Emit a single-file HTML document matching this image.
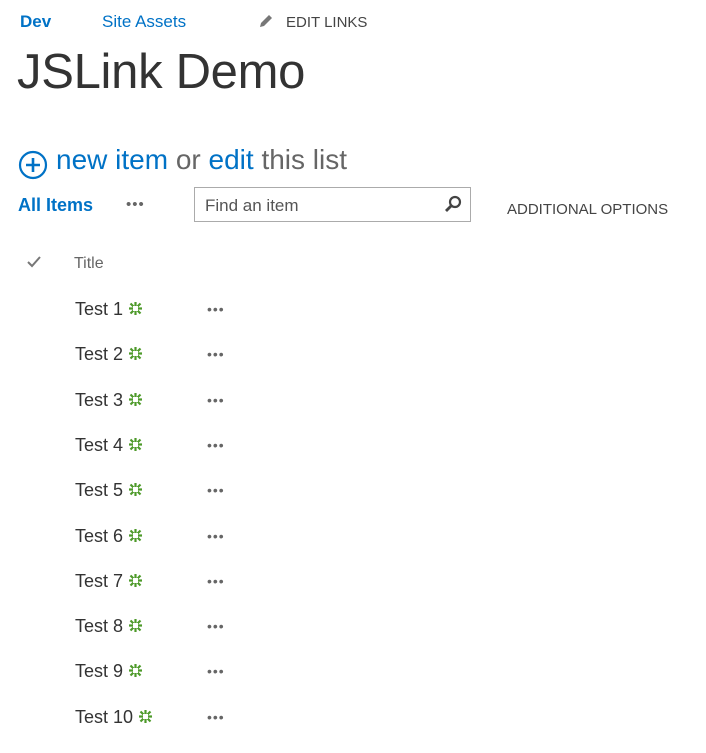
<!DOCTYPE html>
<html><head><meta charset="utf-8"><style>
*{margin:0;padding:0;box-sizing:border-box}
body{width:706px;height:753px;background:#fff;font-family:"Liberation Sans",sans-serif;position:relative;overflow:hidden}
.a{position:absolute;white-space:nowrap}
.blue{color:#0072c6}
.row{position:absolute;left:75px;font-size:18px;color:#333;white-space:nowrap}
.dots{position:absolute;left:207px;font-size:14px;color:#666;letter-spacing:1px}
.g{display:inline-block;vertical-align:middle;margin-left:6px;margin-top:-3px}
</style></head><body>
<div class="a blue" style="left:20px;top:12px;font-size:17px;font-weight:bold">Dev</div>
<div class="a blue" style="left:102px;top:12px;font-size:17px">Site Assets</div>
<svg class="a" style="left:257px;top:13px" width="17" height="17" viewBox="0 0 17 17"><path d="M3 14 L4 10 L12 2 L15 5 L7 13 Z" fill="#777"/></svg>
<div class="a" style="left:286px;top:14px;font-size:15px;color:#444">EDIT LINKS</div>
<div class="a" style="left:17px;top:44px;font-size:49px;color:#333;letter-spacing:-0.3px">JSLink Demo</div>
<svg class="a" style="left:18px;top:150px" width="30" height="30" viewBox="0 0 30 30"><circle cx="15" cy="15" r="13" fill="none" stroke="#0072c6" stroke-width="2.2"/><path d="M15 8v14M8 15h14" stroke="#0072c6" stroke-width="2.6"/></svg>
<div class="a" style="left:56px;top:144px;font-size:28px;color:#666"><span class="blue">new item</span> or <span class="blue">edit</span> this list</div>
<div class="a blue" style="left:18px;top:195px;font-size:18px;font-weight:bold">All Items</div>
<div class="a" style="left:126px;top:196px;font-size:15px;color:#666;letter-spacing:1px">•••</div>
<div class="a" style="left:194px;top:187px;width:277px;height:35px;border:1px solid #ababab"></div>
<div class="a" style="left:205px;top:196px;font-size:17px;color:#555">Find an item</div>
<svg class="a" style="left:443px;top:194px" width="20" height="20" viewBox="0 0 20 20"><circle cx="12" cy="8" r="5" fill="none" stroke="#444" stroke-width="2.2"/><path d="M8.5 11.5L3 17" stroke="#444" stroke-width="2.8"/></svg>
<div class="a" style="left:507px;top:201px;font-size:15px;color:#444">ADDITIONAL OPTIONS</div>
<svg class="a" style="left:27px;top:256px" width="14" height="12" viewBox="0 0 14 12"><path d="M1 6l4 4 8-9" fill="none" stroke="#777" stroke-width="2"/></svg>
<div class="a" style="left:74px;top:255px;font-size:16px;color:#666">Title</div>
<div id="rows"></div>
<script>
var h='';
for(var i=1;i<=10;i++){
 var y=Math.round(299+(i-1)*45.3);
 h+='<div class="row" style="top:'+y+'px">Test '+i+'<svg class="g" width="13" height="13" viewBox="0 0 13 13"><g stroke="#4e9a2a" stroke-width="2.2"><path d="M6.5 0v13M0 6.5h13M1.5 1.5l10 10M11.5 1.5l-10 10"/></g><rect x="4" y="4" width="5" height="5" fill="#fff"/></svg></div>';
 h+='<div class="dots" style="top:'+(y+2)+'px">•••</div>';
}
document.getElementById('rows').innerHTML=h;
</script>
</body></html>
